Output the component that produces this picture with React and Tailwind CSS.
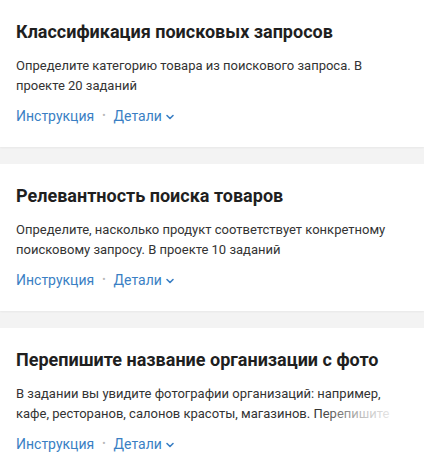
import React from "react";

const projects = [
  {
    title: "Классификация поисковых запросов",
    text: "Определите категорию товара из поискового запроса. В проекте 20 заданий",
  },
  {
    title: "Релевантность поиска товаров",
    text: "Определите, насколько продукт соответствует конкретному поисковому запросу. В проекте 10 заданий",
  },
  {
    title: "Перепишите название организации с фото",
    text: "В задании вы увидите фотографии организаций: например, кафе, ресторанов, салонов красоты, магазинов. Перепишите название организации",
    fade: true,
  },
];

const Chevron = () => (
  <svg className="w-[10px] h-[10px] ml-[3px] mt-[2px]" viewBox="0 0 10 10" fill="none">
    <path d="M2 3.5l3 3 3-3" stroke="currentColor" strokeWidth="1.6" strokeLinecap="round" strokeLinejoin="round" />
  </svg>
);

const ProjectCard = ({ project }) => (
  <div className="bg-white px-4 pt-[20px] pb-[21px] shadow-[0_1px_2px_rgba(0,0,0,0.05)]">
    <h3 className="text-[18px] leading-6 font-bold text-[#1f1f1f]">{project.title}</h3>
    <div className="relative mt-[12px]">
      <p className="text-[13px] leading-5 text-[#333] max-h-10 overflow-hidden">{project.text}</p>
      {project.fade && (
        <div className="absolute right-0 bottom-0 h-5 w-[90px] bg-gradient-to-r from-white/0 via-white/70 to-white" />
      )}
    </div>
    <div className="flex items-center mt-[10px] text-[14px] leading-5 text-[#3a7fc4]">
      <span>Инструкция</span>
      <span className="mx-[8px] text-[#b8b8b8] text-[10px]">•</span>
      <span>Детали</span>
      <Chevron />
    </div>
  </div>
);

export default function App() {
  return (
    <div className="w-[424px] h-[466px] overflow-hidden bg-[#f3f3f3] flex flex-col gap-[17px]" style={{ fontFamily: "Roboto, 'Noto Sans', sans-serif" }}>
      {projects.map((p, i) => (
        <ProjectCard key={i} project={p} />
      ))}
    </div>
  );
}
